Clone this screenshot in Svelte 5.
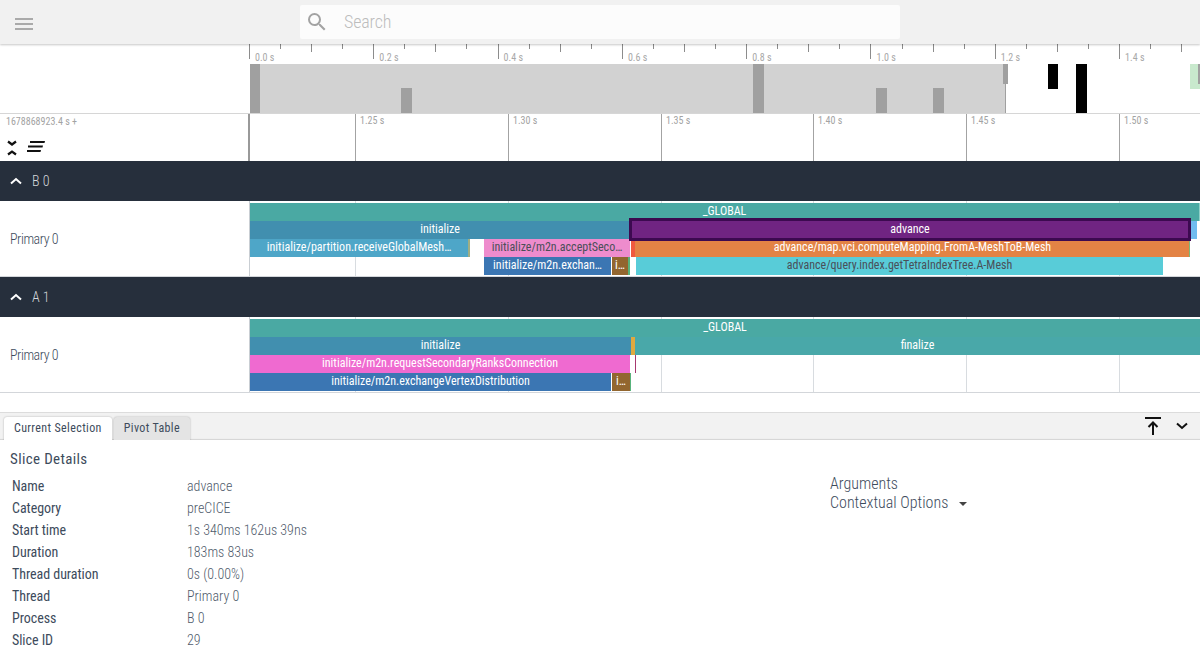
<script>
  const overviewTicks = Array.from({ length: 31 }, (_, i) => ({ x: Math.floor(249.4 + i * 31.08), kind: i % 4 === 0 ? 'major' : i % 2 === 0 ? 'mid' : 'minor' }));
  const overviewLabels = ['0.0 s','0.2 s','0.4 s','0.6 s','0.8 s','1.0 s','1.2 s','1.4 s'];
  const overviewBlocks = [
    { x: 250, w: 756, y: 20, h: 49, c: '#d2d2d2' },
    { x: 250, w: 10, y: 20, h: 49, c: '#a0a0a0' },
    { x: 401, w: 11, y: 44, h: 25, c: '#a0a0a0' },
    { x: 753, w: 11, y: 20, h: 49, c: '#a0a0a0' },
    { x: 876, w: 11, y: 44, h: 25, c: '#a0a0a0' },
    { x: 933, w: 11, y: 44, h: 25, c: '#a0a0a0' },
    { x: 1003, w: 5, y: 20, h: 20, c: '#a0a0a0' },
    { x: 1005, w: 1, y: 40, h: 29, c: '#a0a0a0' },
    { x: 1048, w: 10, y: 20, h: 25, c: '#000' },
    { x: 1076, w: 11, y: 20, h: 49, c: '#000' },
    { x: 1190, w: 10, y: 20, h: 25, c: '#c8e9cd' },
    { x: 1198, w: 2, y: 20, h: 20, c: '#a0a0a0' }
  ];
  const scale = [
    { x: 355, t: '1.25 s' }, { x: 508, t: '1.30 s' }, { x: 661, t: '1.35 s' },
    { x: 813, t: '1.40 s' }, { x: 966, t: '1.45 s' }, { x: 1119, t: '1.50 s' }
  ];
  const gridLines = [355, 508, 661, 813, 966, 1119];
  const W = '#fff', D = '#4a4f58';
  const groups = [
    {
      name: 'B 0',
      slices: [
        { x: 250, w: 949, r: 0, c: '#4aa9a3', t: '_GLOBAL', f: W },
        { x: 1199, w: 1, r: 0, c: '#8fd0c8', t: '', f: W },
        { x: 250, w: 380, r: 1, c: '#418faf', t: 'initialize', f: W },
        { x: 630, w: 560, r: 1, c: '#702482', t: 'advance', f: W, sel: true },
        { x: 1191, w: 6, r: 1, c: '#70bcef', t: '', f: W },
        { x: 250, w: 218, r: 2, c: '#4ea6c8', t: 'initialize/partition.receiveGlobalMesh…', f: W },
        { x: 468, w: 2, r: 2, c: '#9fae84', t: '', f: W },
        { x: 484, w: 146, r: 2, c: '#ee8ccd', t: 'initialize/m2n.acceptSeco…', f: D },
        { x: 631, w: 4, r: 2, c: '#ef5a3f', t: '', f: W },
        { x: 635, w: 555, r: 2, c: '#e38345', t: 'advance/map.vci.computeMapping.FromA-MeshToB-Mesh', f: W },
        { x: 1189, w: 1, r: 2, c: '#7cb87a', t: '', f: W },
        { x: 484, w: 127, r: 3, c: '#3b76b3', t: 'initialize/m2n.exchan…', f: W },
        { x: 612, w: 16, r: 3, c: '#92662f', t: 'i…', f: W },
        { x: 628, w: 2, r: 3, c: '#58b37c', t: '', f: W },
        { x: 636, w: 527, r: 3, c: '#58ccd8', t: 'advance/query.index.getTetraIndexTree.A-Mesh', f: D }
      ]
    },
    {
      name: 'A 1',
      slices: [
        { x: 250, w: 950, r: 0, c: '#4aa9a3', t: '_GLOBAL', f: W },
        { x: 250, w: 381, r: 1, c: '#418faf', t: 'initialize', f: W },
        { x: 631, w: 4, r: 1, c: '#e0a93f', t: '', f: W },
        { x: 635, w: 565, r: 1, c: '#49a8a9', t: 'finalize', f: W },
        { x: 250, w: 380, r: 2, c: '#ef6ad0', t: 'initialize/m2n.requestSecondaryRanksConnection', f: W },
        { x: 635, w: 1, r: 2, c: '#a8386f', t: '', f: W },
        { x: 250, w: 361, r: 3, c: '#3b76b3', t: 'initialize/m2n.exchangeVertexDistribution', f: W },
        { x: 612, w: 18, r: 3, c: '#92662f', t: 'i…', f: W },
        { x: 630, w: 1, r: 3, c: '#58b37c', t: '', f: W }
      ]
    }
  ];
  const details = [
    ['Name', 'advance'], ['Category', 'preCICE'], ['Start time', '1s 340ms 162us 39ns'],
    ['Duration', '183ms 83us'], ['Thread duration', '0s (0.00%)'], ['Thread', 'Primary 0'],
    ['Process', 'B 0'], ['Slice ID', '29']
  ];
</script>

<div class="page">
  <header class="topbar">
    <svg class="menu" viewBox="0 0 18 12" width="18" height="12"><path d="M0 0h18v2H0zM0 5h18v2H0zM0 10h18v2H0z" fill="#aaa"/></svg>
    <div class="search">
      <svg viewBox="0 0 24 24" width="24" height="24"><path fill="#a3a3a3" d="M15.5 14h-.79l-.28-.27A6.47 6.47 0 0 0 16 9.5 6.5 6.5 0 1 0 9.5 16c1.61 0 3.09-.59 4.23-1.57l.27.28v.79l5 4.99L20.49 19l-4.99-5zm-6 0C7.01 14 5 11.99 5 9.5S7.01 5 9.5 5 14 7.01 14 9.5 11.99 14 9.5 14z"/></svg>
      <span>Search</span>
    </div>
  </header>

  <section class="overview">
    {#each overviewBlocks as b}
      <div class="abs" style="left:{b.x}px;top:{b.y}px;width:{b.w}px;height:{b.h}px;background:{b.c}"></div>
    {/each}
    {#each overviewTicks as t}
      <div class="tick {t.kind}" style="left:{t.x}px"></div>
    {/each}
    {#each overviewLabels as l, i}
      <span class="ovlabel" style="left:{255 + i * 124.3}px">{l}</span>
    {/each}
  </section>

  <section class="scale">
    <div class="scale-left">
      <span class="offset">1678868923.4 s +</span>
      <div class="scale-icons">
        <svg viewBox="0 0 12 16" width="12" height="16"><path d="M2 1.500 6 4.500l4-3M2 14.500 6 11.500l4 3" fill="none" stroke="#111" stroke-width="2.200"/></svg>
        <svg viewBox="0 0 18 12" width="18" height="12"><path d="M3 0h15l-.5 2H3zM1 4.500h15l-.5 2H1zM0 9h14l-.5 2H0z" fill="#111"/></svg>
      </div>
    </div>
    {#each scale as s}
      <div class="sline" style="left:{s.x}px"></div>
      <span class="slabel" style="left:{s.x + 5}px">{s.t}</span>
    {/each}
  </section>

  {#each groups as g}
    <div class="group-head">
      <svg viewBox="0 0 12 8" width="12" height="8"><path d="M1 6.500 6 2l5 4.500" fill="none" stroke="#fff" stroke-width="2"/></svg>
      <span>{g.name}</span>
    </div>
    <div class="track">
      <span class="track-name">Primary 0</span>
      <div class="gl first" style="left:249px"></div>
      {#each gridLines as x}
        <div class="gl" style="left:{x}px"></div>
      {/each}
      {#each g.slices as s}
        <div class="slice" class:sel={s.sel} style="left:{s.x}px;top:{2 + s.r * 18}px;width:{s.w}px;background:{s.c};color:{s.f}">{s.t}</div>
      {/each}
    </div>
  {/each}

  <div class="spacer"></div>

  <div class="tabbar">
    <div class="tab active">Current Selection</div>
    <div class="tab">Pivot Table</div>
    <div class="tab-icons">
      <svg viewBox="0 0 18 20" width="18" height="20"><path d="M1 1h16v2H1z" fill="#111"/><path d="M9 19V7M4.500 11 9 6.500l4.500 4.500" fill="none" stroke="#111" stroke-width="2"/></svg>
      <svg viewBox="0 0 12 8" width="12" height="8"><path d="M1 1.500 6 6l5-4.500" fill="none" stroke="#111" stroke-width="2"/></svg>
    </div>
  </div>

  <div class="details">
    <div class="col-left">
      <h2>Slice Details</h2>
      <div class="rows">
        {#each details as d}
          <div class="row"><span class="k">{d[0]}</span><span class="v">{d[1]}</span></div>
        {/each}
      </div>
    </div>
    <div class="col-right">
      <div>Arguments</div>
      <div class="ctx">Contextual Options <i class="caret"></i></div>
    </div>
  </div>
</div>

<style>
  :global(body) { margin: 0; background: #fff; overflow: hidden; }
  .page {
    width: 1200px; height: 660px; overflow: hidden; display: flex; flex-direction: column;
    font-family: Roboto, "Liberation Sans", sans-serif; font-stretch: 75%; color: #3d4b5c;
  }
  .topbar {
    height: 44px; flex: none; background: #f1f1f1; box-shadow: 0 1px 2px rgba(0,0,0,.22);
    display: flex; align-items: center; position: relative; z-index: 2;
  }
  .menu { margin-left: 15px; margin-top: 4px; }
  .search {
    margin-left: 267px; width: 600px; height: 34px; background: #fcfcfc; border-radius: 2px;
    display: flex; align-items: center; box-sizing: border-box; padding-left: 5px;
  }
  .search span { margin-left: 15px; font-size: 18px; font-weight: 300; color: #bdbdbd; letter-spacing: -.15px; margin-top: -1px; }
  .overview { height: 69px; flex: none; position: relative; border-bottom: 1px solid #d6d6d6; }
  .abs { position: absolute; }
  .tick { position: absolute; top: 0; width: 1px; background: #8c8c8c; }
  .tick.major { height: 15px; }
  .tick.mid { height: 8px; }
  .tick.minor { height: 5px; }
  .ovlabel { position: absolute; top: 8px; font-size: 10px; line-height: 12px; color: #a8a8a8; }
  .scale { height: 47px; flex: none; position: relative; }
  .scale-left {
    width: 248px; height: 47px; border-right: 2px solid #999; display: flex; flex-direction: column;
  }
  .offset { font-size: 10px; color: #a3a3a3; margin: 2px 0 0 6px; line-height: 12px; }
  .scale-icons { display: flex; align-items: center; gap: 9px; margin: 12px 0 0 6px; }
  .scale-icons svg:last-child { margin-top: -2px; }
  .sline { position: absolute; top: 0; bottom: 0; width: 1px; background: #a3a3a3; }
  .slabel { position: absolute; top: 0; font-size: 10px; line-height: 14px; color: #a3a3a3; }
  .group-head {
    height: 40px; flex: none; background: #262f3c; color: #d4d7db; display: flex; align-items: center;
    padding-left: 10px; gap: 10px; font-size: 14px; font-weight: 300; letter-spacing: 0;
  }
  .group-head svg { margin-top: -1px; }
  .group-head span { margin-top: -1px; }
  .track {
    height: 75px; flex: none; position: relative; border-bottom: 1px solid #d3d6da; overflow: hidden;
  }
  .track-name { position: absolute; left: 10px; top: 30px; font-size: 14px; font-weight: 300; line-height: 16px; color: #3d4b5c; letter-spacing: -.45px; }
  .gl { position: absolute; top: 0; bottom: 0; width: 1px; background: #d8dce0; }
  .gl.first { background: #c9ced3; }
  .slice {
    position: absolute; height: 18px; font-size: 12px; line-height: 16px; text-align: center;
    white-space: nowrap; overflow: hidden;
  }
  .slice.sel { z-index: 1; overflow: visible; }
  .slice.sel::after {
    content: ""; position: absolute; left: -1px; right: -1px; top: -3px; bottom: -2px;
    border: 3px solid #3c0a50; pointer-events: none;
  }
  .spacer { height: 19px; flex: none; }
  .tabbar {
    height: 28px; flex: none; background: #f2f2f2; border-top: 1px solid #dcdcdc; display: flex; align-items: flex-end;
    padding-left: 4px; gap: 2px; box-sizing: border-box; box-shadow: inset 0 -2px 1px -1px #d4d4d4;
  }
  .tab {
    height: 23px; line-height: 23px; padding: 0 10px; font-size: 12px; background: #e4e4e4; color: #3d4b5c;
    border-radius: 3px 3px 0 0; box-shadow: 0 0 2px rgba(0,0,0,.3); letter-spacing: .37px;
  }
  .tab.active { background: #fff; }
  .tab-icons { margin-left: auto; display: flex; align-items: center; gap: 14px; height: 26px; padding-right: 12px; align-self: flex-start; }
  .tab-icons svg:first-child { margin-top: -1px; }
  .details { flex: 1; display: flex; background: #fff; }
  .col-left { width: 830px; flex: none; }
  h2 { font-size: 15px; font-weight: 400; margin: 9px 0 0 10px; line-height: 20px; color: #3d4b5c; letter-spacing: .35px; }
  .rows { margin: 6px 0 0 12px; }
  .row { display: flex; height: 22px; line-height: 22px; font-size: 14px; }
  .k { width: 175px; color: #3d4b5c; letter-spacing: -.05px; }
  .v { color: #4f5b6b; font-weight: 300; }
  .col-right { font-size: 16px; font-weight: 300; line-height: 20px; color: #3d4b5c; margin-top: 33.500px; }
  .ctx { margin-top: -.5px; }
  .caret {
    display: inline-block; width: 0; height: 0; border: 4px solid transparent; border-top-color: #444; border-bottom: 0;
    margin-left: 7px; vertical-align: 2px;
  }
</style>
